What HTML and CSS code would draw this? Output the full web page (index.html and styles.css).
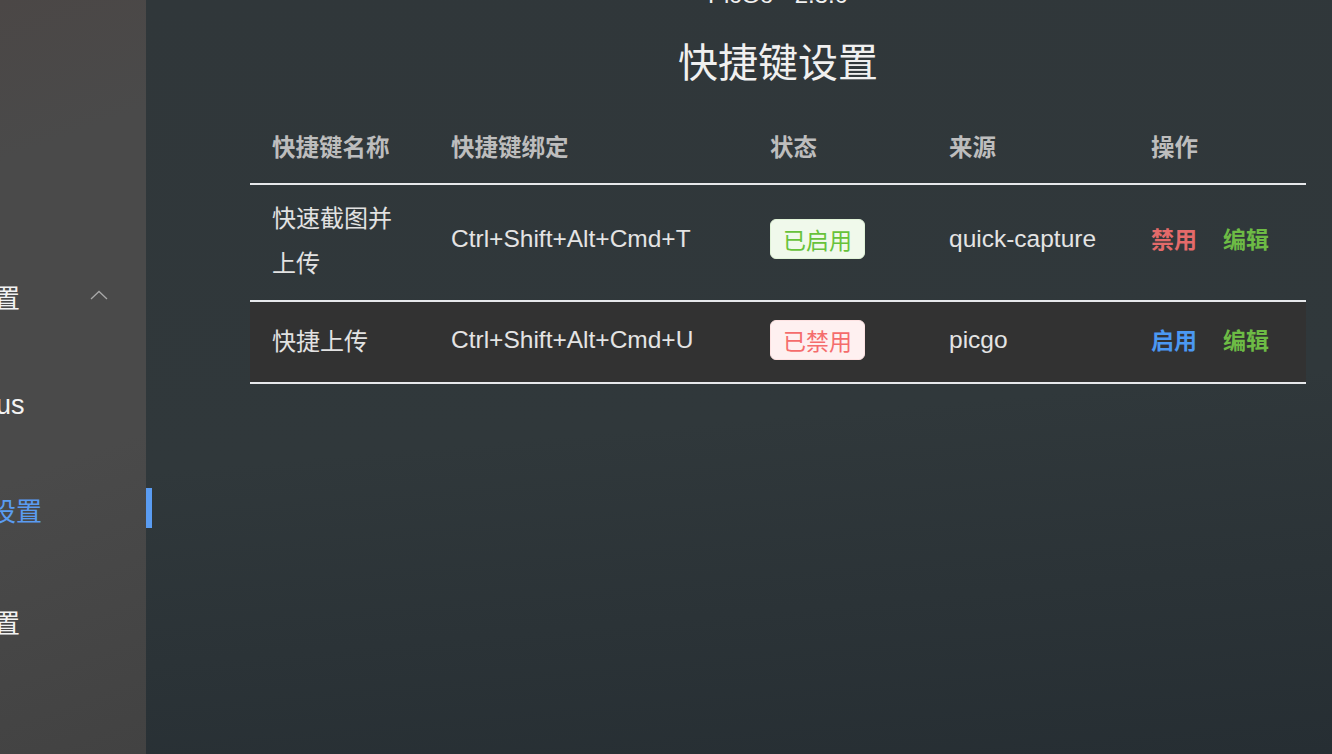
FILE: index.html
```html
<!DOCTYPE html>
<html lang="zh-CN">
<head>
<meta charset="utf-8">
<title>快捷键设置</title>
<link rel="stylesheet" href="styles.css">
</head>
<body>
<div class="app">
  <aside class="sidebar">
    <div class="menu-item item-sub">
      <span class="menu-text">置</span>
      <svg class="chevron" width="18" height="10" viewBox="0 0 18 10"><path d="M1 9 L9 1.5 L17 9" fill="none" stroke="#a8a8a8" stroke-width="1.3"/></svg>
    </div>
    <div class="menu-item item-us"><span class="menu-text latin">us</span></div>
    <div class="menu-item item-active"><span class="menu-text">设置</span></div>
    <div class="menu-item item-last"><span class="menu-text">置</span></div>
  </aside>
  <div class="active-bar"></div>
  <main class="main">
    <div class="content">
      <div class="version">PicGo - 2.3.0</div>
      <h1 class="title">快捷键设置</h1>
      <div class="table">
        <div class="row head">
          <div class="cell">快捷键名称</div>
          <div class="cell">快捷键绑定</div>
          <div class="cell">状态</div>
          <div class="cell">来源</div>
          <div class="cell">操作</div>
        </div>
        <div class="row body r1">
          <div class="cell name">快速截图并上传</div>
          <div class="cell latin">Ctrl+Shift+Alt+Cmd+T</div>
          <div class="cell"><span class="tag tag-on">已启用</span></div>
          <div class="cell latin">quick-capture</div>
          <div class="cell actions"><span class="btn btn-red">禁用</span><span class="btn btn-green">编辑</span></div>
        </div>
        <div class="row body r2">
          <div class="cell name">快捷上传</div>
          <div class="cell latin">Ctrl+Shift+Alt+Cmd+U</div>
          <div class="cell"><span class="tag tag-off">已禁用</span></div>
          <div class="cell latin">picgo</div>
          <div class="cell actions"><span class="btn btn-blue">启用</span><span class="btn btn-green">编辑</span></div>
        </div>
      </div>
    </div>
  </main>
</div>
</body>
</html>
```

FILE: styles.css
```css
* { box-sizing: border-box; }
html, body { margin: 0; padding: 0; }
body {
  width: 1332px;
  height: 754px;
  overflow: hidden;
  font-family: "Liberation Sans", "Noto Sans CJK SC", sans-serif;
  background: #30373a;
}
.app {
  position: relative;
  display: flex;
  width: 1332px;
  height: 754px;
}
.sidebar {
  width: 146px;
  flex: none;
  height: 754px;
  overflow: hidden;
  background: linear-gradient(160deg, #4b4746 0%, #4a4a4a 20%, #4a4a4a 60%, #424242 100%);
  display: flex;
  flex-direction: column;
  font-family: "Noto Sans CJK SC", sans-serif;
  color: #f2f2f2;
  font-size: 26px;
}
.menu-item {
  display: flex;
  align-items: center;
  height: 40px;
}
.menu-text { margin-left: -6px; line-height: 40px; }
.menu-text.latin { font-family: "Liberation Sans", sans-serif; font-weight: normal; margin-left: -4px; font-size: 27px; color: #f4f4f4; }
.item-sub { margin-top: 277px; justify-content: space-between; padding-right: 38px; }
.chevron { margin-top: -4px; }
.item-us { margin-top: 68px; }
.item-active { margin-top: 65px; color: #5a9cf2; }
.item-active .menu-text { margin-left: -10px; }
.item-last { margin-top: 72px; }
.active-bar {
  position: absolute;
  left: 146px;
  top: 488px;
  width: 6px;
  height: 40px;
  background: #5a9cf2;
}
.main {
  flex: 1;
  height: 754px;
  overflow: hidden;
  background: linear-gradient(175deg, #30373a 0%, #30383b 55%, #262e33 100%);
  padding: 0 26px 0 104px;
}
.content {
  display: flex;
  flex-direction: column;
  align-items: stretch;
}
.version {
  margin-top: -20px;
  height: 30px;
  line-height: 30px;
  text-align: center;
  font-size: 24px;
  color: #f0f0f0;
}
.title {
  margin: 22px 0 0;
  height: 56px;
  line-height: 56px;
  text-align: center;
  font-family: "Noto Sans CJK SC", sans-serif;
  font-weight: normal;
  font-size: 40px;
  color: #f0f0f0;
}
.table {
  margin-top: 25px;
  display: flex;
  flex-direction: column;
}
.row {
  display: grid;
  grid-template-columns: 179px 319px 179px 202px 1fr;
  align-items: center;
  border-bottom: 2px solid #e6e8eb;
}
.cell {
  padding: 0 22px;
  font-size: 24px;
  line-height: 45px;
  color: #e2e2e2;
  font-family: "Noto Sans CJK SC", sans-serif;
}
.cell.latin { font-family: "Liberation Sans", sans-serif; font-size: 24.5px; color: #e4e4e4; }
.head { height: 72px; padding-bottom: 4px; }
.head .cell {
  font-weight: bold;
  font-size: 23.5px;
  color: #bdbdbd;
}
.r1 { height: 117px; padding-bottom: 8px; }
.r2 { height: 82px; padding-bottom: 6px; background: #323232; }
.tag {
  display: inline-flex;
  align-items: center;
  height: 40px;
  padding: 0 12px;
  border-radius: 6px;
  font-size: 23px;
  line-height: 38px;
  border: 1px solid;
  font-family: "Noto Sans CJK SC", sans-serif;
}
.tag-on { background: #f0f9eb; border-color: #e1f3d8; color: #67c23a; }
.tag-off { background: #fef0f0; border-color: #fde2e2; color: #f56c6c; }
.actions { display: flex; gap: 26px; }
.btn { font-size: 23px; font-weight: bold; }
.btn-red { color: #e46a6a; }
.btn-green { color: #6dbb45; }
.btn-blue { color: #4b98f2; }
```
